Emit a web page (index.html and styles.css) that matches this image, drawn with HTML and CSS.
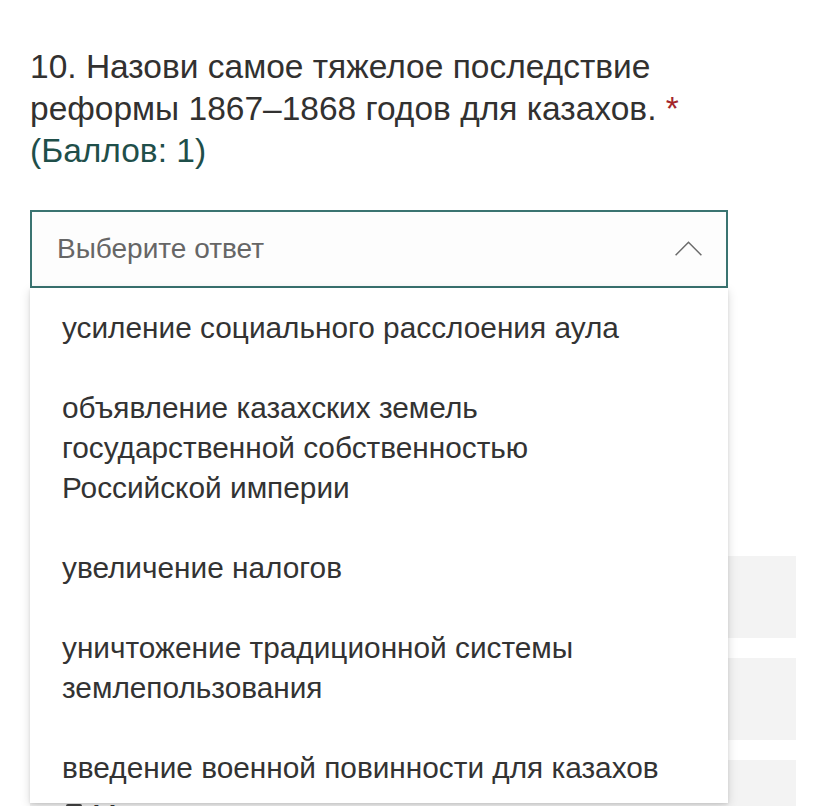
FILE: index.html
```html
<!DOCTYPE html>
<html lang="ru">
<head>
<meta charset="utf-8">
<title>Вопрос 10</title>
<link rel="stylesheet" href="styles.css">
</head>
<body>
<div class="page">
  <div class="question">
    <div class="title">
      <span class="num">10.</span> Назови самое тяжелое последствие<br>реформы 1867–1868 годов для казахов. <span class="req">*</span><br><span class="points">(Баллов: 1)</span>
    </div>
    <div class="select-wrap">
      <div class="select">
        <span class="placeholder">Выберите ответ</span>
        <svg class="chevron" width="27" height="15" viewBox="0 0 27 15" aria-hidden="true"><path d="M0.6 14.2 L13.5 1.3 L26.4 14.2" fill="none" stroke="#6b6b6b" stroke-width="1.5"/></svg>
      </div>
      <ul class="menu">
        <li class="opt">усиление социального расслоения аула</li>
        <li class="opt">объявление казахских земель<br>государственной собственностью<br>Российской империи</li>
        <li class="opt">увеличение налогов</li>
        <li class="opt">уничтожение традиционной системы<br>землепользования</li>
        <li class="opt">введение военной повинности для казахов</li>
      </ul>
    </div>
    <div class="behind">
      <div class="row"></div>
      <div class="row"></div>
      <div class="row">
        <span class="radio"></span>
        <span class="row-text">Меньше половины</span>
      </div>
    </div>
  </div>
</div>
</body>
</html>
```
FILE: styles.css
```css
html, body {
  margin: 0;
  padding: 0;
  background: #ffffff;
}
body {
  font-family: "Liberation Sans", Arial, sans-serif;
  color: #333333;
  overflow: hidden;
  height: 806px;
}
.page {
  padding: 46px 30px 0 30px;
}
.title {
  font-size: 33.5px;
  line-height: 42px;
  color: #323130;
}
.req {
  color: #a4262c;
}
.points {
  color: #1f4f4a;
}
.select-wrap {
  position: relative;
  margin-top: 38px;
  width: 698px;
}
.select {
  box-sizing: border-box;
  height: 78px;
  border: 2px solid #3a7471;
  background: #fdfdfd;
  display: flex;
  align-items: center;
  justify-content: space-between;
  padding: 0 24px 0 25px;
}
.placeholder {
  font-size: 28px;
  color: #666666;
}
.chevron {
  display: block;
  margin-top: -2px;
}
.menu {
  position: absolute;
  top: 100%;
  left: 0;
  right: 0;
  margin: 0;
  padding: 0;
  list-style: none;
  background: #ffffff;
  height: 515px;
  overflow: hidden;
  box-shadow: 0 3px 10px rgba(0, 0, 0, 0.14), 0 1px 3px rgba(0, 0, 0, 0.1);
  z-index: 2;
}
.opt {
  padding: 20px 32px;
  font-size: 29.8px;
  line-height: 40px;
  color: #333333;
}
.behind {
  margin-top: 268px;
  display: flex;
  flex-direction: column;
  gap: 20px;
  width: 766px;
}
.row {
  height: 82px;
  background: #f3f3f3;
}
.row:last-child {
  height: 100px;
  display: flex;
  align-items: flex-start;
  gap: 10px;
  padding: 38px 0 0 36px;
  box-sizing: border-box;
}
.radio {
  width: 12px;
  height: 20px;
  margin-top: 6px;
  border: 2px solid #444444;
  border-radius: 2px;
}
.row-text {
  font-size: 29.8px;
  line-height: 34px;
  color: #333333;
}
```
